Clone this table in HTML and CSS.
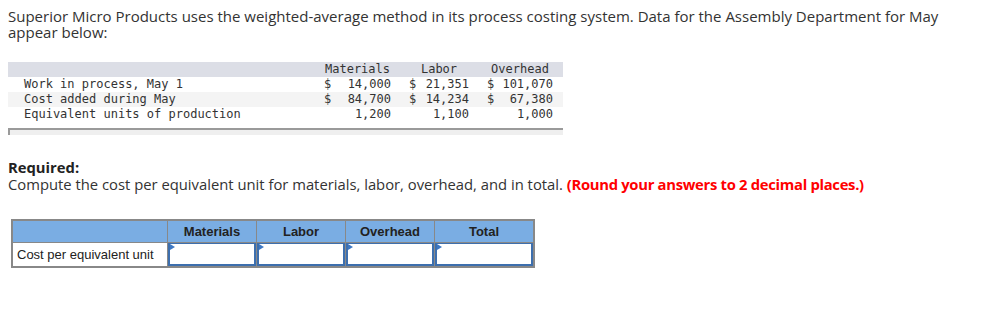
FILE: index.html
```html
<!DOCTYPE html>
<html>
<head>
<meta charset="utf-8">
<link rel="stylesheet" href="styles.css">
</head>
<body>
<p class="intro">Superior Micro Products uses the weighted-average method in its process costing system. Data for the Assembly Department for May appear below:</p>

<div class="data">
  <div class="drow dhead">
    <span></span>
    <span class="h">Materials</span>
    <span class="h">Labor</span>
    <span class="h">Overhead</span>
  </div>
  <div class="drow">
    <span>Work in process, May 1</span>
    <span class="c"><i>$</i><i>14,000</i></span>
    <span class="c"><i>$</i><i>21,351</i></span>
    <span class="c"><i>$</i><i>101,070</i></span>
  </div>
  <div class="drow alt">
    <span>Cost added during May</span>
    <span class="c"><i>$</i><i>84,700</i></span>
    <span class="c"><i>$</i><i>14,234</i></span>
    <span class="c"><i>$</i><i>67,380</i></span>
  </div>
  <div class="drow">
    <span>Equivalent units of production</span>
    <span class="c r"><i>1,200</i></span>
    <span class="c r"><i>1,100</i></span>
    <span class="c r"><i>1,000</i></span>
  </div>
</div>
<div class="dfoot"></div>

<div class="req">
  <div class="req-title">Required:</div>
  <div class="req-text">Compute the cost per equivalent unit for materials, labor, overhead, and in total. <span class="red">(Round your answers to 2 decimal places.)</span></div>
</div>

<table class="ans">
  <tr class="ahead">
    <th class="lbl"></th>
    <th>Materials</th>
    <th>Labor</th>
    <th>Overhead</th>
    <th>Total</th>
  </tr>
  <tr>
    <td class="lbl">Cost per equivalent unit</td>
    <td class="inp"><div class="box"><span class="tri"></span></div></td>
    <td class="inp"><div class="box"><span class="tri"></span></div></td>
    <td class="inp"><div class="box"><span class="tri"></span></div></td>
    <td class="inp"><div class="box"><span class="tri"></span></div></td>
  </tr>
</table>
</body>
</html>
```
FILE: styles.css
```css
html, body { margin: 0; padding: 0; background: #fff; }
body { padding: 8px; font-family: "Open Sans", "Liberation Sans", sans-serif; color: #333; }

.intro {
  margin: 0;
  font-size: 15px;
  line-height: 16px;
  width: 945px;
}

.data {
  margin-top: 22px;
  width: 555px;
  font-family: "DejaVu Sans Mono", "Liberation Mono", monospace;
  font-size: 12px;
  color: #333;
}
.drow {
  display: grid;
  grid-template-columns: 1fr 67px 60px 66px;
  column-gap: 18px;
  padding: 0 10px 0 16px;
  height: 15px;
  line-height: 15px;
  white-space: pre;
}
.dhead { background: #dcdee6; }
.alt { background: #f4f4f4; }
.h { text-align: center; }
.c { display: flex; justify-content: space-between; }
.c i { font-style: normal; }
.c.r { justify-content: flex-end; }

.dfoot {
  margin-top: 6px;
  width: 553px;
  height: 5px;
  border-top: 2px solid #9a9a9a;
  border-left: 2px solid #9a9a9a;
  background: #efefef;
}

.req { margin-top: 24px; font-size: 14.8px; line-height: 17px; }
.req-title { font-weight: 700; color: #222; }
.req-text { color: #333; }
.red { color: #f00; font-weight: 700; letter-spacing: -0.3px; }

.ans {
  margin-top: 26px;
  margin-left: 3px;
  border-collapse: collapse;
  border: 2px solid #888;
  font-family: "Liberation Sans", Arial, sans-serif;
  font-size: 13px;
  color: #222;
}
.ans th, .ans td { border: 1px solid #888; padding: 0; }
.ahead th {
  background: #7aade3;
  height: 21px;
  font-weight: 700;
  text-align: center;
  width: 88px;
}
.ahead th:last-child { width: 98px; }
.ahead th.lbl { width: 154px; }
td.lbl { padding: 0 4px; height: 23px; text-align: left; white-space: nowrap; }
td.inp { background: #fff; }
.box {
  position: relative;
  height: 20px;
  border: 2px solid #3d6fae;
  border-top-width: 1px;
  background: #fff;
}
.tri {
  position: absolute;
  left: 0;
  top: 0;
  width: 0;
  height: 0;
  border-top: 3px solid transparent;
  border-bottom: 3px solid transparent;
  border-left: 5px solid #3d78c4;
}
```
